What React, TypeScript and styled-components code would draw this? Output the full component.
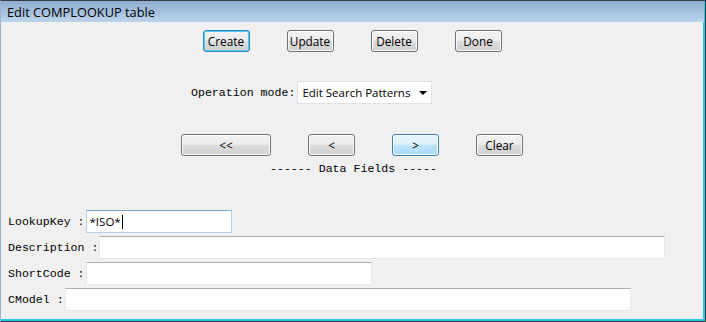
import React from "react";
import styled, { createGlobalStyle, css } from "styled-components";

const Global = createGlobalStyle`
  html, body { margin: 0; padding: 0; background: #f0f0f0; }
  #root { width: 706px; height: 322px; }
`;

const Window = styled.div`
  box-sizing: border-box;
  width: 706px;
  height: 322px;
  display: flex;
  flex-direction: column;
  background: #f0f0f0;
  border: 1px solid #3a3a3a;
  border-left-color: #9db3cc;
  box-shadow: inset -2px -2px 0 #27c6ee;
  font-family: "Liberation Sans", Arial, sans-serif;
`;

const TitleBar = styled.div`
  height: 21px;
  flex: none;
  display: flex;
  align-items: center;
  padding-left: 6px;
  background: linear-gradient(#8eadd1, #bbd3ec);
  border-right: 1px solid #27c6ee;
  font-size: 12.8px;
  color: #000;
  font-family: "Open Sans", "Liberation Sans", sans-serif;
`;

const Body = styled.div`
  flex: 1;
  display: flex;
  flex-direction: column;
  padding-right: 2px;
`;

const ButtonRow = styled.div<{ $top: number }>`
  display: flex;
  justify-content: center;
  gap: 37px;
  margin-top: ${(p) => p.$top}px;
`;

const Button = styled.div<{ $w?: number; $state?: "focus" | "hover" }>`
  box-sizing: border-box;
  width: ${(p) => p.$w ?? 47}px;
  height: 22px;
  display: flex;
  align-items: center;
  justify-content: center;
  border: 1px solid #707070;
  border-radius: 3px;
  font-family: "Open Sans", "Liberation Sans", sans-serif;
  font-size: 11.8px;
  color: #000;
  background: linear-gradient(#f2f2f2 0%, #ebebeb 50%, #dddddd 51%, #cfcfcf 100%);
  box-shadow: inset 0 0 0 1px #fcfcfc;
  ${(p) =>
    p.$state === "focus" &&
    css`
      border-color: #3c7fb1;
      box-shadow: inset 0 0 0 1px #48d1fb;
    `}
  ${(p) =>
    p.$state === "hover" &&
    css`
      border-color: #3c7fb1;
      background: linear-gradient(#eaf6fd 0%, #d9f0fc 50%, #bee6fd 51%, #a7d9f5 100%);
    `}
`;

const ModeRow = styled.div`
  display: flex;
  align-items: center;
  margin-top: 29px;
  padding-left: 190px;
  gap: 2px;
`;

const Mono = styled.span`
  font-family: "Liberation Mono", "Courier New", monospace;
  font-size: 11.6px;
  color: #000;
  white-space: pre;
`;

const Select = styled.div`
  box-sizing: border-box;
  width: 135px;
  height: 23px;
  display: flex;
  align-items: center;
  justify-content: space-between;
  padding: 0 4px 0 4px;
  background: #fff;
  border: 1px solid #e2e2e2;
  font-family: "Open Sans", "Liberation Sans", sans-serif;
  font-size: 11.5px;
`;

const Arrow = styled.span`
  width: 0;
  height: 0;
  border-left: 4px solid transparent;
  border-right: 4px solid transparent;
  border-top: 4px solid #000;
`;

const Caption = styled.div`
  display: flex;
  justify-content: center;
  padding-left: 3px;
  margin-top: 6px;
`;

const Fields = styled.div`
  display: flex;
  flex-direction: column;
  gap: 3px;
  margin-top: 35px;
  padding-left: 7px;
`;

const FieldRow = styled.div`
  display: flex;
  align-items: center;
  gap: 1px;
`;

const Input = styled.div<{ $w: number; $focus?: boolean }>`
  box-sizing: border-box;
  width: ${(p) => p.$w}px;
  height: 23px;
  display: flex;
  align-items: center;
  padding-left: 3px;
  background: #fff;
  border: 1px solid #e3e9ef;
  border-top-color: #abadb3;
  font-family: "Open Sans", "Liberation Sans", sans-serif;
  font-size: 11.5px;
  ${(p) =>
    p.$focus &&
    css`
      border-color: #b5cfe7;
      border-top-color: #7da2ce;
    `}
`;

const Caret = styled.span`
  display: inline-block;
  width: 1px;
  height: 14px;
  background: #000;
  margin-left: 1px;
`;

export default function App() {
  return (
    <>
      <Global />
      <Window>
        <TitleBar>Edit COMPLOOKUP table</TitleBar>
        <Body>
          <ButtonRow $top={8}>
            <Button $state="focus">Create</Button>
            <Button>Update</Button>
            <Button>Delete</Button>
            <Button>Done</Button>
          </ButtonRow>
          <ModeRow>
            <Mono>Operation mode:</Mono>
            <Select>
              Edit Search Patterns
              <Arrow />
            </Select>
          </ModeRow>
          <ButtonRow $top={30}>
            <Button $w={90}>&lt;&lt;</Button>
            <Button>&lt;</Button>
            <Button $state="hover">&gt;</Button>
            <Button>Clear</Button>
          </ButtonRow>
          <Caption>
            <Mono>------ Data Fields -----</Mono>
          </Caption>
          <Fields>
            <FieldRow>
              <Mono>LookupKey :</Mono>
              <Input $w={146} $focus>
                *ISO*
                <Caret />
              </Input>
            </FieldRow>
            <FieldRow>
              <Mono>Description :</Mono>
              <Input $w={566} />
            </FieldRow>
            <FieldRow>
              <Mono>ShortCode :</Mono>
              <Input $w={286} />
            </FieldRow>
            <FieldRow>
              <Mono>CModel :</Mono>
              <Input $w={566} />
            </FieldRow>
          </Fields>
        </Body>
      </Window>
    </>
  );
}
